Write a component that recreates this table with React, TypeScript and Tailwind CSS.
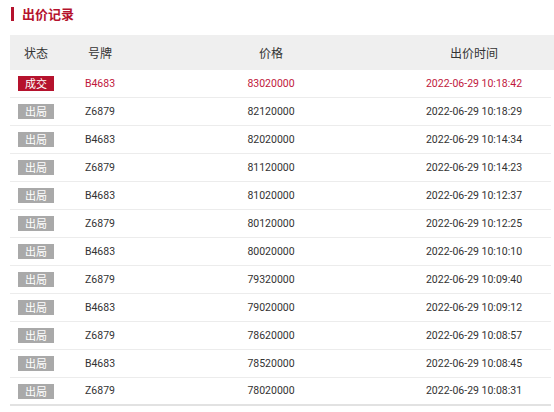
import React from "react";

const rows = [
  { s: "成交", p: "B4683", price: "83020000", t: "2022-06-29 10:18:42", win: true },
  { s: "出局", p: "Z6879", price: "82120000", t: "2022-06-29 10:18:29" },
  { s: "出局", p: "B4683", price: "82020000", t: "2022-06-29 10:14:34" },
  { s: "出局", p: "Z6879", price: "81120000", t: "2022-06-29 10:14:23" },
  { s: "出局", p: "B4683", price: "81020000", t: "2022-06-29 10:12:37" },
  { s: "出局", p: "Z6879", price: "80120000", t: "2022-06-29 10:12:25" },
  { s: "出局", p: "B4683", price: "80020000", t: "2022-06-29 10:10:10" },
  { s: "出局", p: "Z6879", price: "79320000", t: "2022-06-29 10:09:40" },
  { s: "出局", p: "B4683", price: "79020000", t: "2022-06-29 10:09:12" },
  { s: "出局", p: "Z6879", price: "78620000", t: "2022-06-29 10:08:57" },
  { s: "出局", p: "B4683", price: "78520000", t: "2022-06-29 10:08:45" },
  { s: "出局", p: "Z6879", price: "78020000", t: "2022-06-29 10:08:31" },
];

const cjk = { fontFamily: '"Noto Sans CJK SC", sans-serif' };

export default function App() {
  return (
    <div
      className="w-[554px] h-[412px] bg-white overflow-hidden text-[10.5px]"
      style={{ fontFamily: 'Roboto, "Noto Sans CJK SC", sans-serif' }}
    >
      <div className="flex items-center h-[27px] pl-[11px]">
        <div className="w-[3px] h-[14px] bg-[#b5122d]" />
        <div className="ml-[8px] text-[13px] font-bold text-[#b5122d] leading-none" style={cjk}>
          出价记录
        </div>
      </div>
      <div className="ml-[10px] mt-[8px]">
        <div
          className="grid grid-cols-[52px_76px_266px_140px_1fr] h-[35px] items-center bg-[#efefef] text-[#333] text-[12px]"
          style={cjk}
        >
          <div className="text-center">状态</div>
          <div className="text-center">号牌</div>
          <div className="text-center">价格</div>
          <div className="text-center">出价时间</div>
          <div />
        </div>
        {rows.map((r, i) => {
          const color = r.win ? "text-[#c0173c]" : "text-[#333]";
          return (
            <div
              key={i}
              className={`grid grid-cols-[52px_76px_266px_140px_1fr] h-[28px] items-center mr-[3px] ${
                i === rows.length - 1 ? "border-b-2 border-[#e2e2e2]" : "border-b border-[#ececec]"
              } ${color}`}
            >
              <div className="flex justify-center">
                <span
                  className={`w-[36px] h-[15px] flex items-center justify-center text-white text-[11px] leading-none ${
                    r.win ? "bg-[#b5122d]" : "bg-[#a9a9a9]"
                  }`}
                  style={cjk}
                >
                  {r.s}
                </span>
              </div>
              <div className="text-center">{r.p}</div>
              <div className="text-center">{r.price}</div>
              <div className="text-center">{r.t}</div>
              <div />
            </div>
          );
        })}
      </div>
    </div>
  );
}
